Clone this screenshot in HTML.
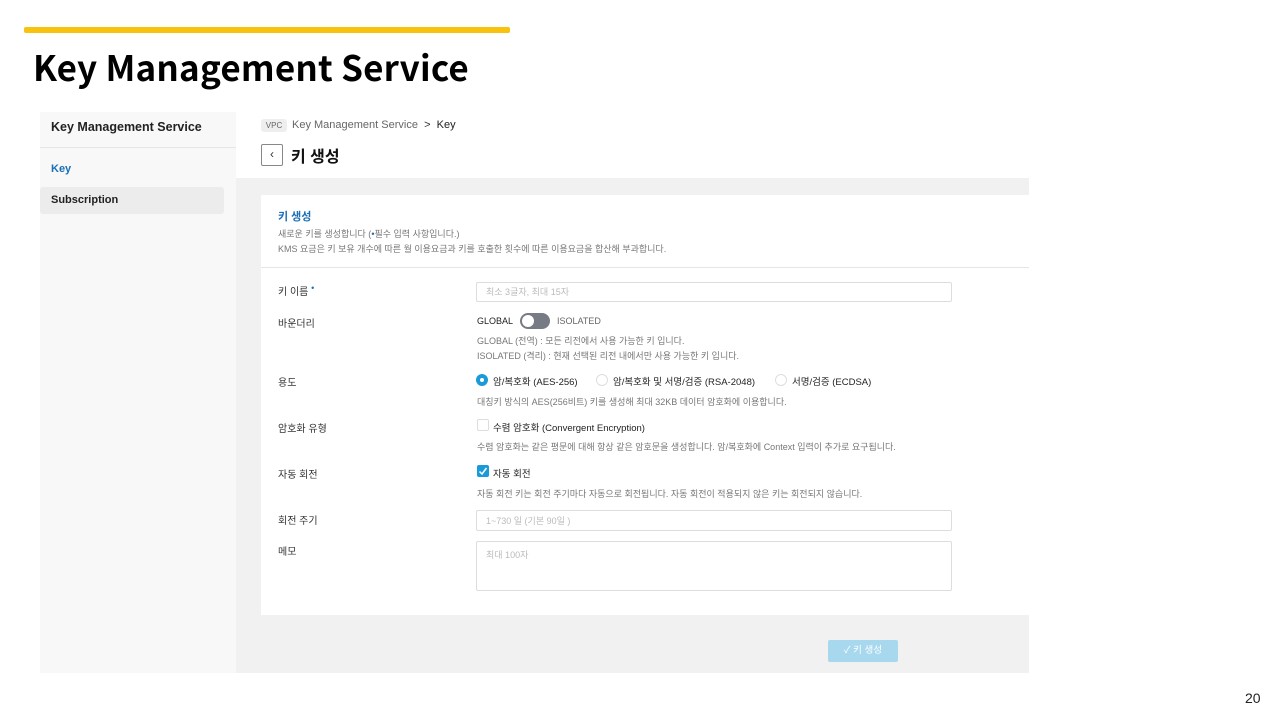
<!DOCTYPE html>
<html><head><meta charset="utf-8"><style>
*{margin:0;padding:0;box-sizing:border-box}
body{width:1280px;height:720px;background:#fff;position:relative;overflow:hidden;font-family:"Liberation Sans","Noto Sans CJK KR",sans-serif;color:#222}
.a{position:absolute;white-space:nowrap}
.lbl{font-size:10px;color:#333}
.desc{font-size:9px;color:#777}
.inp{position:absolute;border:1px solid #ddd;background:#fff;border-radius:2px;font-size:9px;color:#bbb;padding-left:9px}
</style></head><body>
<div class="a" style="left:24px;top:27px;width:486px;height:6px;background:#f9c20e;border-radius:2px"></div>
<div class="a" style="left:33px;top:45px;font-size:35px;font-weight:bold;color:#000;font-family:'Noto Sans CJK KR','Liberation Sans',sans-serif;line-height:44px;letter-spacing:0.2px">Key Management Service</div>

<div class="a" style="left:40px;top:112px;width:196px;height:561px;background:#f8f8f8"></div>
<div class="a" style="left:40px;top:147px;width:196px;height:1px;background:#e6e6e6"></div>
<div class="a" style="left:51px;top:120px;font-size:12.5px;font-weight:bold;color:#222">Key Management Service</div>
<div class="a" style="left:51px;top:163px;font-size:11px;font-weight:bold;color:#1a6fb5">Key</div>
<div class="a" style="left:40px;top:187px;width:184px;height:27px;background:#ececec;border-radius:3px"></div>
<div class="a" style="left:51px;top:194px;font-size:11px;font-weight:bold;color:#222">Subscription</div>

<div class="a" style="left:261px;top:119px;width:26px;height:13px;background:#eee;border-radius:3px;font-size:8px;color:#666;text-align:center;line-height:13px">VPC</div>
<div class="a" style="left:292px;top:119px;font-size:11px;color:#666">Key Management Service&nbsp; <span style="color:#333">&gt;</span>&nbsp; <span style="color:#222">Key</span></div>
<div class="a" style="left:261px;top:144px;width:22px;height:22px;border:1px solid #888;border-radius:2px;font-size:12px;text-align:center;line-height:19px;color:#333">‹</div>
<div class="a" style="left:291px;top:143px;font-size:16px;font-weight:bold;color:#111">키 생성</div>

<div class="a" style="left:236px;top:178px;width:793px;height:495px;background:#f1f1f1"></div>
<div class="a" style="left:261px;top:195px;width:768px;height:420px;background:#fff"></div>
<div class="a" style="left:261px;top:267px;width:768px;height:1px;background:#e6e6e6"></div>
<div class="a" style="left:278px;top:208px;font-size:11px;font-weight:bold;color:#1a6fb5">키 생성</div>
<div class="a desc" style="left:278px;top:227px">새로운 키를 생성합니다 (<span style="color:#1a6fb5">•</span>필수 입력 사항입니다.)</div>
<div class="a desc" style="left:278px;top:242px">KMS 요금은 키 보유 개수에 따른 월 이용요금과 키를 호출한 횟수에 따른 이용요금을 합산해 부과합니다.</div>

<div class="a lbl" style="left:278px;top:283px">키 이름 <span style="color:#1a6fb5;font-size:9px;vertical-align:top">•</span></div>
<div class="inp" style="left:476px;top:282px;width:476px;height:20px;line-height:18px">최소 3글자, 최대 15자</div>

<div class="a lbl" style="left:278px;top:315px">바운더리</div>
<div class="a" style="left:477px;top:316px;font-size:9px;color:#222">GLOBAL</div>
<div class="a" style="left:520px;top:313px;width:30px;height:16px;background:#777c84;border-radius:8px"></div>
<div class="a" style="left:522px;top:315px;width:12px;height:12px;background:#fff;border-radius:50%"></div>
<div class="a" style="left:557px;top:316px;font-size:9px;color:#666">ISOLATED</div>
<div class="a desc" style="left:477px;top:334px">GLOBAL (전역) : 모든 리전에서 사용 가능한 키 입니다.</div>
<div class="a desc" style="left:477px;top:349px">ISOLATED (격리) : 현재 선택된 리전 내에서만 사용 가능한 키 입니다.</div>

<div class="a lbl" style="left:278px;top:374px">용도</div>
<div class="a" style="left:476px;top:374px;width:12px;height:12px;border-radius:50%;background:#1a9ad8"></div>
<div class="a" style="left:480px;top:378px;width:4px;height:4px;border-radius:50%;background:#fff"></div>
<div class="a" style="left:493px;top:374px;font-size:9.5px;color:#222">암/복호화 (AES-256)</div>
<div class="a" style="left:596px;top:374px;width:12px;height:12px;border-radius:50%;border:1px solid #ddd"></div>
<div class="a" style="left:613px;top:374px;font-size:9.5px;color:#222">암/복호화 및 서명/검증 (RSA-2048)</div>
<div class="a" style="left:775px;top:374px;width:12px;height:12px;border-radius:50%;border:1px solid #ddd"></div>
<div class="a" style="left:792px;top:374px;font-size:9.5px;color:#222">서명/검증 (ECDSA)</div>
<div class="a desc" style="left:477px;top:395px">대칭키 방식의 AES(256비트) 키를 생성해 최대 32KB 데이터 암호화에 이용합니다.</div>

<div class="a lbl" style="left:278px;top:420px">암호화 유형</div>
<div class="a" style="left:477px;top:419px;width:12px;height:12px;border:1px solid #ddd;border-radius:2px"></div>
<div class="a" style="left:493px;top:420px;font-size:9.5px;color:#222">수렴 암호화 (Convergent Encryption)</div>
<div class="a desc" style="left:477px;top:440px">수렴 암호화는 같은 평문에 대해 항상 같은 암호문을 생성합니다. 암/복호화에 Context 입력이 추가로 요구됩니다.</div>

<div class="a lbl" style="left:278px;top:466px">자동 회전</div>
<div class="a" style="left:477px;top:465px;width:12px;height:12px;background:#1a9ad8;border-radius:2px"></div>
<svg class="a" style="left:477px;top:465px" width="12" height="12"><path d="M2.5 6.5 L5 9 L9.5 3" stroke="#fff" stroke-width="1.5" fill="none"/></svg>
<div class="a" style="left:493px;top:466px;font-size:9.5px;color:#222">자동 회전</div>
<div class="a desc" style="left:477px;top:487px">자동 회전 키는 회전 주기마다 자동으로 회전됩니다. 자동 회전이 적용되지 않은 키는 회전되지 않습니다.</div>

<div class="a lbl" style="left:278px;top:512px">회전 주기</div>
<div class="inp" style="left:476px;top:510px;width:476px;height:21px;line-height:20px">1~730 일 (기본 90일 )</div>
<div class="a lbl" style="left:278px;top:543px">메모</div>
<div class="inp" style="left:476px;top:541px;width:476px;height:50px;padding-top:6px">최대 100자</div>

<div class="a" style="left:828px;top:640px;width:70px;height:22px;background:#a8d8ee;border-radius:2px;color:#fff;font-size:9.5px;text-align:center;line-height:22px">✓ 키 생성</div>
<div class="a" style="left:1245px;top:690px;font-size:14px;color:#222">20</div>
</body></html>
